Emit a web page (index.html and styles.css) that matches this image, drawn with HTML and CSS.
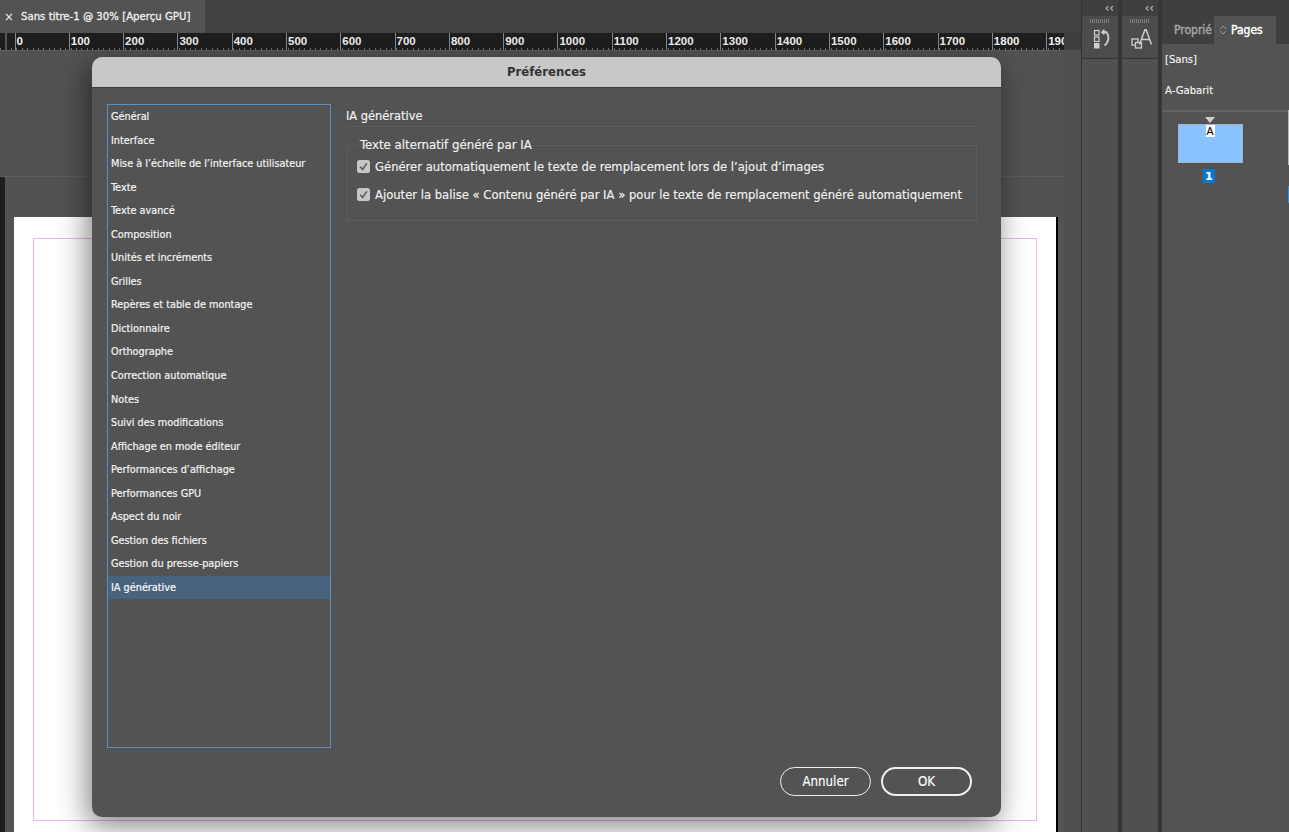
FILE: index.html
```html
<!DOCTYPE html>
<html lang="fr">
<head>
<meta charset="utf-8">
<title>Préférences</title>
<link rel="stylesheet" href="styles.css">
</head>
<body>
<div class="app">
  <main class="main">
    <div class="tabbar">
      <div class="doc-tab"><span class="close">×</span><span class="doc-name">Sans titre-1 @ 30% [Aperçu GPU]</span></div>
    </div>
    <div class="ruler">
      <span class="ruler-lead"></span>
      <span class="mark">0</span><span class="mark">100</span><span class="mark">200</span><span class="mark">300</span><span class="mark">400</span><span class="mark">500</span><span class="mark">600</span><span class="mark">700</span><span class="mark">800</span><span class="mark">900</span><span class="mark">1000</span><span class="mark">1100</span><span class="mark">1200</span><span class="mark">1300</span><span class="mark">1400</span><span class="mark">1500</span><span class="mark">1600</span><span class="mark">1700</span><span class="mark">1800</span><span class="mark">1900</span>
    </div>
    <div class="canvas">
      <div class="paste-top"></div>
      <div class="paste-low">
        <div class="vruler"></div>
        <div class="paste">
          <div class="page"><div class="margins"></div></div>
        </div>
      </div>
    </div>
  </main>
  <div class="gutter-a"></div>
  <aside class="strip">
    <div class="chev">‹‹</div>
    <div class="strip-tile">
      <div class="grip"></div>
      <svg class="tile-icon icon-pages" width="18" height="20" viewBox="0 0 18 20" aria-hidden="true">
        <rect x="1.5" y="1.5" width="4.5" height="4.5" fill="none" stroke="#cfcfcf" stroke-width="1.2"/>
        <rect x="1.5" y="8" width="4.5" height="4.5" fill="none" stroke="#cfcfcf" stroke-width="1.2"/>
        <rect x="1" y="14" width="5.5" height="5.5" fill="#cfcfcf"/>
        <path d="M9 3.2h5.5M11.5 1L9 3.2l2.5 2.2M13 3.2c3.5 3 3.5 9-1.5 13.5" fill="none" stroke="#cfcfcf" stroke-width="1.7"/>
      </svg>
    </div>
    <div class="strip-rest"></div>
  </aside>
  <div class="gutter-b"></div>
  <aside class="strip">
    <div class="chev">‹‹</div>
    <div class="strip-tile">
      <div class="grip"></div>
      <svg class="tile-icon icon-char" width="21" height="20" viewBox="0 0 21 20" aria-hidden="true">
        <rect x="1" y="10" width="6" height="6" fill="none" stroke="#cfcfcf" stroke-width="1.3"/>
        <rect x="4.5" y="13.5" width="6" height="5.5" fill="#535353" stroke="#cfcfcf" stroke-width="1.3"/>
        <path d="M8.5 15.5L14 .5h1l5.5 15M10.5 10.5h8" fill="none" stroke="#cfcfcf" stroke-width="1.5"/>
      </svg>
    </div>
    <div class="strip-rest"></div>
  </aside>
  <div class="gutter-b"></div>
  <aside class="panel">
    <div class="panel-tabs">
      <span class="tab-props">Proprié</span>
      <span class="tab-pages">
        <svg class="updown" width="8" height="10" viewBox="0 0 8 10" aria-hidden="true"><path d="M1 4l3-3 3 3M1 6l3 3 3-3" fill="none" stroke="#9a9a9a" stroke-width="1"/></svg>
        Pages
      </span>
    </div>
    <div class="panel-body">
      <div class="master master-none">[Sans]</div>
      <div class="master master-a">A-Gabarit</div>
      <div class="thumbs">
        <div class="page-tri"></div>
        <div class="thumb"><span class="thumb-a">A</span></div>
        <div class="page-num">1</div>
      </div>
    </div>
    <div class="peek peek-grey"></div>
    <div class="peek peek-blue"></div>
  </aside>

  <section class="dialog">
    <header class="dialog-title">Préférences</header>
    <div class="dialog-body">
      <ul class="cats">
        <li>Général</li>
        <li>Interface</li>
        <li>Mise à l’échelle de l’interface utilisateur</li>
        <li>Texte</li>
        <li>Texte avancé</li>
        <li>Composition</li>
        <li>Unités et incréments</li>
        <li>Grilles</li>
        <li>Repères et table de montage</li>
        <li>Dictionnaire</li>
        <li>Orthographe</li>
        <li>Correction automatique</li>
        <li>Notes</li>
        <li>Suivi des modifications</li>
        <li>Affichage en mode éditeur</li>
        <li>Performances d’affichage</li>
        <li>Performances GPU</li>
        <li>Aspect du noir</li>
        <li>Gestion des fichiers</li>
        <li>Gestion du presse-papiers</li>
        <li class="selected">IA générative</li>
      </ul>
      <div class="content">
        <h2 class="content-title">IA générative</h2>
        <fieldset class="group">
          <legend>Texte alternatif généré par IA</legend>
          <div class="opt">
            <svg class="box" width="13" height="13" viewBox="0 0 13 13" aria-hidden="true"><rect width="13" height="13" rx="2.5" fill="#c6c6c6"/><path d="M3.2 6.8l2.4 2.6 4.2-6" fill="none" stroke="#5c5c5c" stroke-width="1.6"/></svg>
            <span>Générer automatiquement le texte de remplacement lors de l’ajout d’images</span>
          </div>
          <div class="opt">
            <svg class="box" width="13" height="13" viewBox="0 0 13 13" aria-hidden="true"><rect width="13" height="13" rx="2.5" fill="#c6c6c6"/><path d="M3.2 6.8l2.4 2.6 4.2-6" fill="none" stroke="#5c5c5c" stroke-width="1.6"/></svg>
            <span>Ajouter la balise « Contenu généré par IA » pour le texte de remplacement généré automatiquement</span>
          </div>
        </fieldset>
      </div>
    </div>
    <footer class="dialog-foot">
      <button class="btn" type="button">Annuler</button>
      <button class="btn btn-default" type="button">OK</button>
    </footer>
  </section>
</div>
</body>
</html>
```
FILE: styles.css
```css
* { box-sizing: border-box; }
html, body { margin: 0; padding: 0; height: 100%; overflow: hidden; }
body { font-family: "DejaVu Sans Condensed", "DejaVu Sans", sans-serif; color: #f2f2f2; background: #3e3e3e; }

.app { position: relative; display: flex; width: 1289px; height: 832px; overflow: hidden; background: #3e3e3e; }

/* document area */
.main { width: 1081px; display: flex; flex-direction: column; }
.tabbar { height: 33px; background: #424242; flex: none; }
.doc-tab { width: 205px; height: 33px; background: #535353; display: flex; align-items: center; padding: 0 0 0 4px; gap: 8px; font-size: 11.3px; color: #f0f0f0; white-space: nowrap; }
.doc-name { -webkit-text-stroke: .3px #f0f0f0; }
.close { font-size: 13px; width: 9px; }

.ruler { height: 17px; width: 1064px; flex: none; background: #1e1e1e; display: flex; overflow: hidden; align-self: flex-start;
  background-image: repeating-linear-gradient(90deg, #777 0 1px, transparent 1px 5.43px);
  background-size: 100% 2px; background-position: 0 100%; background-repeat: no-repeat; }
.ruler-lead { width: 14.5px; flex: none; background: linear-gradient(90deg, transparent 0 5px, #555 5px 7px, transparent 7px); }
.mark { width: 54.3px; flex: none; border-left: 1px solid #8a8a8a; padding-left: 1px; font: 700 11.5px/16px "Liberation Sans", sans-serif; color: #f0f0f0; }

.canvas { flex: 1; display: flex; flex-direction: column; background: #4f4f4f; min-height: 0; }
.paste-top { height: 127px; flex: none; background: #525252; border-top: 1px solid #5c5c5c; border-bottom: 1px solid #5c5c5c; width: 1064px; }
.paste-low { flex: 1; display: flex; min-height: 0; background: #525252; width: 1079px; border-right: 15px solid #505050; }
.vruler { width: 5px; flex: none; background: #1e1e1e; }
.paste { flex: 1; padding: 40px 0 0 9px; min-width: 0; }
.page { width: 1042px; height: 640px; background: #fff; box-shadow: 2px 0 0 #000; padding: 21px 19px 0 19px; }
.margins { height: 583px; border: 1px solid #eab8e6; }

/* panel strips */
.gutter-a { width: 1px; background: #333; }
.gutter-b { width: 4px; background: #363636; }
.strip { width: 36px; display: flex; flex-direction: column; }
.chev { height: 16px; background: #3f3f3f; font-size: 13px; line-height: 16px; text-align: right; padding-right: 4px; color: #ccc; flex: none; }
.strip-tile { height: 43px; flex: none; background: #4c4c4c; border-bottom: 1px solid #333; display: flex; flex-direction: column; align-items: center; padding-top: 3px; }
.grip { width: 20px; height: 4px; background: repeating-linear-gradient(90deg, #7e7e7e 0 1px, transparent 1px 2px); }
.tile-icon { margin-top: 6px; }
.icon-pages { margin-left: 3px; }
.icon-char { margin-left: 3px; }
.strip-rest { flex: 1; background: #505050; }

/* pages panel */
.panel { flex: 1; display: flex; flex-direction: column; background: #535353; position: relative; }
.panel-tabs { height: 44px; flex: none; background: #3f3f3f; display: flex; align-items: flex-end; padding-top: 16px; font-size: 12px; }
.tab-props { width: 52px; height: 28px; padding-left: 12px; line-height: 28px; white-space: nowrap; color: #a8a8a8; -webkit-text-stroke: .4px #a8a8a8; }
.tab-pages { width: 62px; height: 28px; line-height: 28px; background: #535353; color: #fff; padding-left: 5px; display: flex; align-items: center; gap: 4px; -webkit-text-stroke: .4px #fff; }
.updown { flex: none; }
.panel-body { flex: 1; font-size: 11.2px; color: #f2f2f2; -webkit-text-stroke: .15px #f2f2f2; }
.master { padding-left: 3px; }
.master-none { height: 31px; line-height: 31px; }
.master-a { height: 37px; line-height: 32px; border-bottom: 2px solid #626262; }
.thumbs { display: flex; flex-direction: column; align-items: center; width: 96px; padding-top: 5px; }
.page-tri { width: 0; height: 0; border: 5px solid transparent; border-top: 6px solid #cfcfcf; border-bottom: 0; }
.thumb { width: 65px; height: 39px; margin-top: 1px; background: #8ac3ff; border: 1px solid #9fb4c8; display: flex; justify-content: center; }
.thumb-a { width: 9px; height: 12px; background: #fff; color: #111; font: 400 10.5px/12px "Liberation Sans", sans-serif; text-align: center; -webkit-text-stroke: .2px #111; }
.page-num { width: 12px; height: 14px; margin-top: 6px; margin-left: -2px; background: #0a78d0; color: #fff; font: 700 10.5px/14px "DejaVu Sans", sans-serif; text-align: center; }
.peek { position: absolute; right: 0; width: 1px; }
.peek-grey { top: 110px; height: 55px; background: #b8b8b8; }
.peek-blue { top: 186px; height: 17px; background: #2f8fe0; }

/* dialog */
.dialog { position: absolute; left: 92px; top: 57px; width: 909px; height: 760px; border-radius: 10px; background: #535353; box-shadow: -4px 8px 30px rgba(0,0,0,.5); display: flex; flex-direction: column; overflow: hidden; }
.dialog-title { height: 31px; flex: none; background: #c8c8c8; border-bottom: 1px solid #3e3e3e; color: #333; font-size: 13px; font-weight: 700; line-height: 30px; text-align: center; }
.dialog-body { flex: 1; display: flex; padding: 16px 0 0 15px; gap: 15px; min-height: 0; }
.cats { list-style: none; margin: 0; padding: 0; width: 224px; height: 644px; border: 1.5px solid #5b8fbd; font-size: 10.8px; flex: none; -webkit-text-stroke: .2px #f2f2f2; }
.cats li { height: 23.55px; line-height: 23.5px; padding-left: 3px; white-space: nowrap; }
.cats li.selected { background: #47637e; color: #fff; }
.content { width: 631px; }
.content-title { margin: 0; font-size: 12.7px; font-weight: 400; line-height: 23px; height: 23px; border-bottom: 1px solid #5e5e5e; color: #f4f4f4; -webkit-text-stroke: .15px #f4f4f4; }
.group { margin: 18px 0 0 1px; padding: 6px 0 0 9px; width: 630px; height: 76px; border: 1px solid #5e5e5e; position: relative; }
.group legend { padding: 0 3px; font-size: 13.1px; line-height: 16px; position: absolute; top: -9px; left: 9px; background: #535353; -webkit-text-stroke: .15px #f2f2f2; }
.opt { display: flex; align-items: center; gap: 5px; height: 28px; font-size: 12.9px; white-space: nowrap; -webkit-text-stroke: .15px #f2f2f2; }
.box { flex: none; }

.dialog-foot { flex: none; display: flex; justify-content: flex-end; gap: 10px; padding: 0 29px 21px 0; }
.btn { width: 91px; height: 29px; border-radius: 14.5px; border: 1.3px solid #f0f0f0; background: #535353; color: #fff; font-family: inherit; font-size: 13.2px; padding: 0; -webkit-text-stroke: .15px #fff; }
.btn-default { border-width: 2px; }
```
